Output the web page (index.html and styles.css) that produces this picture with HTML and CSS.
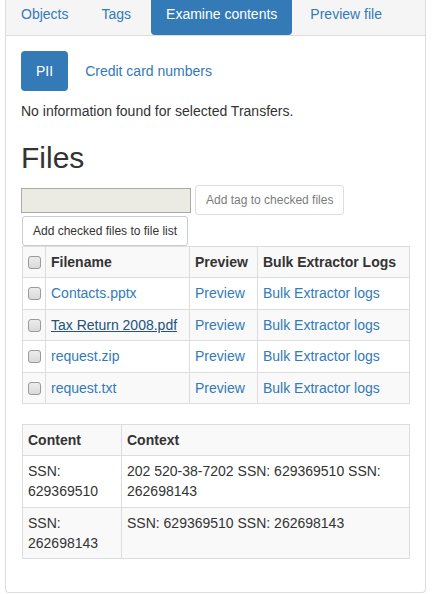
FILE: index.html
```html
<!DOCTYPE html>
<html>
<head>
<meta charset="utf-8">
<link rel="stylesheet" href="styles.css">
</head>
<body>
<div class="panel">
  <ul class="tabs">
    <li><a class="tab">Objects</a></li>
    <li><a class="tab">Tags</a></li>
    <li class="tab-item-active"><a class="tab active">Examine contents</a></li>
    <li><a class="tab">Preview file</a></li>
  </ul>
  <div class="body">
    <ul class="pills">
      <li><a class="pill active">PII</a></li>
      <li><a class="pill">Credit card numbers</a></li>
    </ul>
    <p class="info">No information found for selected Transfers.</p>
    <h2 class="title">Files</h2>
    <div class="tag-row">
      <input class="tag-input" type="text" disabled>
      <button class="btn disabled">Add tag to checked files</button>
    </div>
    <div class="list-row">
      <button class="btn">Add checked files to file list</button>
    </div>
    <table class="grid files">
      <colgroup><col class="c-check"><col class="c-name"><col class="c-prev"><col class="c-bulk"></colgroup>
      <tbody>
        <tr><th><span class="cb"></span></th><th>Filename</th><th>Preview</th><th>Bulk Extractor Logs</th></tr>
        <tr><td><span class="cb"></span></td><td><a class="link">Contacts.pptx</a></td><td><a class="link">Preview</a></td><td><a class="link">Bulk Extractor logs</a></td></tr>
        <tr><td><span class="cb"></span></td><td><a class="link hover">Tax Return 2008.pdf</a></td><td><a class="link">Preview</a></td><td><a class="link">Bulk Extractor logs</a></td></tr>
        <tr><td><span class="cb"></span></td><td><a class="link">request.zip</a></td><td><a class="link">Preview</a></td><td><a class="link">Bulk Extractor logs</a></td></tr>
        <tr><td><span class="cb"></span></td><td><a class="link">request.txt</a></td><td><a class="link">Preview</a></td><td><a class="link">Bulk Extractor logs</a></td></tr>
      </tbody>
    </table>
    <table class="grid ctx">
      <colgroup><col class="c-content"><col class="c-context"></colgroup>
      <tbody>
        <tr><th>Content</th><th>Context</th></tr>
        <tr><td>SSN: 629369510</td><td>202 520-38-7202 SSN: 629369510 SSN: 262698143</td></tr>
        <tr><td>SSN: 262698143</td><td>SSN: 629369510 SSN: 262698143</td></tr>
      </tbody>
    </table>
  </div>
</div>
</body>
</html>
```
FILE: styles.css
```css
html, body {
  margin: 0;
  padding: 0;
  background: #fff;
}
body {
  font-family: "Liberation Sans", Arial, sans-serif;
  font-size: 14px;
  line-height: 20px;
  color: #333;
  padding-left: 5px;
}
.panel {
  box-sizing: border-box;
  width: 421px;
  height: 593px;
  border: 1px solid #ddd;
  border-top: none;
  border-radius: 0 0 4px 4px;
}
.tabs {
  list-style: none;
  margin: 0;
  padding: 0;
  display: flex;
  height: 35px;
  background: #f5f5f5;
  border-bottom: 1px solid #ddd;
}
.tabs li + li {
  margin-left: 3px;
}
.tabs li.tab-item-active {
  margin-left: 5px;
}
.tab {
  display: block;
  padding: 4px 15px 11px;
  color: #337ab7;
  border-radius: 0 0 4px 4px;
}
.tab.active {
  background: #337ab7;
  color: #fff;
}
.body {
  padding: 15px 15px 0;
}
.pills {
  list-style: none;
  margin: 0;
  padding: 0;
  display: flex;
}
.pills li + li {
  margin-left: 2px;
}
.pill {
  display: block;
  padding: 10px 15px;
  color: #337ab7;
  border-radius: 4px;
}
.pill.active {
  background: #337ab7;
  color: #fff;
}
.info {
  margin: 10px 0 10px;
}
.title {
  font-size: 30px;
  font-weight: 500;
  line-height: 33px;
  margin: 20px 0 11px;
}
.tag-row {
  display: flex;
  align-items: center;
  gap: 4px;
}
.tag-input {
  width: 170px;
  height: 25px;
  box-sizing: border-box;
  margin: 0;
  border: 1px solid #a9a9a9;
  background: #ebebe4;
  padding: 0;
}
.btn {
  font-family: "Liberation Sans", Arial, sans-serif;
  font-size: 12px;
  line-height: 18px;
  padding: 5px 10px;
  border: 1px solid #ccc;
  border-radius: 3px;
  background: #fff;
  color: #333;
  margin: 0;
}
.btn.disabled {
  opacity: 0.65;
}
.list-row {
  margin-top: 1px;
  padding-left: 1px;
  display: flex;
}
.list-row .btn {
  height: 30px;
  padding-top: 5px;
  padding-bottom: 5px;
}
.grid {
  border-collapse: collapse;
  table-layout: fixed;
  width: 387px;
  margin: 1px 0 20px 1px;
}
.grid th, .grid td {
  border: 1px solid #ddd;
  padding: 5px 5px 5.4px;
  text-align: left;
  vertical-align: top;
  line-height: 20px;
}
.grid th {
  font-weight: bold;
}
.grid tr:nth-child(odd) {
  background: #f9f9f9;
}
.grid.files {
  margin-top: 0;
}
.c-check { width: 23px; }
.c-name { width: 144px; }
.c-prev { width: 68px; }
.c-bulk { width: 152px; }
.c-content { width: 99px; }
.c-context { width: 288px; }
.link {
  color: #337ab7;
  text-decoration: none;
}
.link.hover {
  color: #23527c;
  text-decoration: underline;
}
.cb {
  display: inline-block;
  width: 11px;
  height: 11px;
  border: 1px solid #9a9a9a;
  border-radius: 3px;
  background: linear-gradient(#ececec, #d9d9d9);
  vertical-align: -2px;
}
```
